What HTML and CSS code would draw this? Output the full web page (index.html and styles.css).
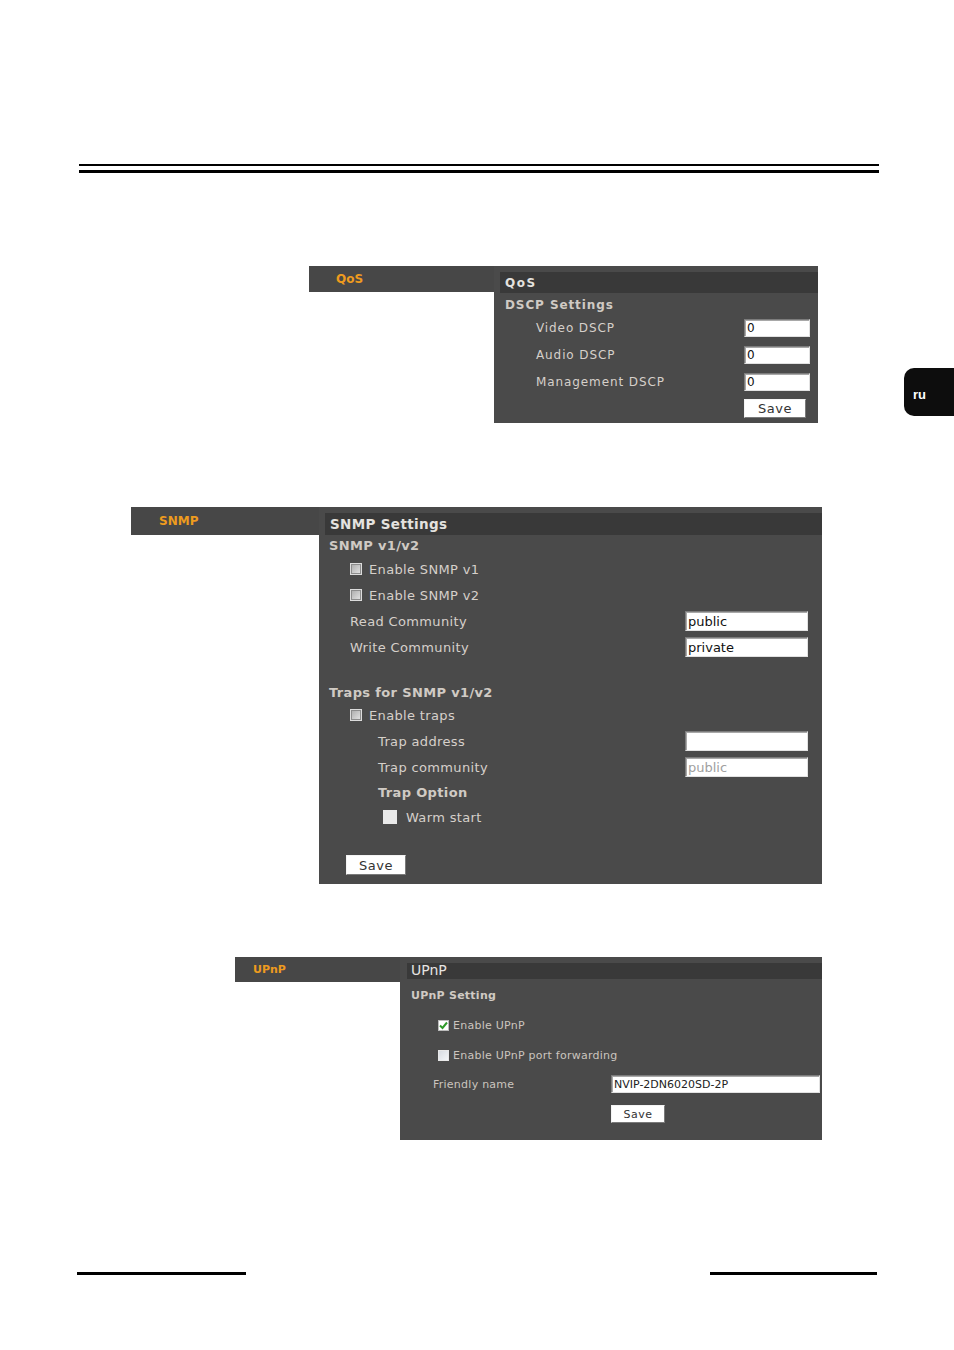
FILE: index.html
```html
<!DOCTYPE html>
<html lang="ru">
<head>
    <meta charset="UTF-8">
    <title>QoS / SNMP / UPnP</title>
    <link rel="stylesheet" href="styles.css">
</head>
<body>
<div class="page">

    <div class="rules-top">
        <div class="rule-thin"></div>
        <div class="rule-thick"></div>
    </div>

    <!-- QoS -->
    <section class="shot shot-qos">
        <div class="nav"><span>QoS</span></div>
        <div class="panel">
            <div class="panel-head">QoS</div>
            <div class="panel-body">
                <div class="group-title">DSCP Settings</div>
                <div class="form-grid">
                    <label>Video DSCP</label>
                    <input type="text" value="0">
                    <label>Audio DSCP</label>
                    <input type="text" value="0">
                    <label>Management DSCP</label>
                    <input type="text" value="0">
                </div>
                <div class="btn-row"><button>Save</button></div>
            </div>
        </div>
    </section>

    <!-- SNMP -->
    <section class="shot shot-snmp">
        <div class="nav"><span>SNMP</span></div>
        <div class="panel">
            <div class="panel-head">SNMP Settings</div>
            <div class="panel-body">
                <div class="group-title">SNMP v1/v2</div>
                <div class="row check-row"><span class="cb"></span>Enable SNMP v1</div>
                <div class="row check-row"><span class="cb"></span>Enable SNMP v2</div>
                <div class="row field-row">
                    <label>Read Community</label>
                    <input type="text" value="public">
                </div>
                <div class="row field-row">
                    <label>Write Community</label>
                    <input type="text" value="private">
                </div>

                <div class="group-title traps-title">Traps for SNMP v1/v2</div>
                <div class="row check-row"><span class="cb"></span>Enable traps</div>
                <div class="row field-row sub">
                    <label>Trap address</label>
                    <input type="text" value="">
                </div>
                <div class="row field-row sub">
                    <label>Trap community</label>
                    <input type="text" value="public" disabled>
                </div>
                <div class="row option-title">Trap Option</div>
                <div class="row warm-row"><span class="cb-flat"></span>Warm start</div>
                <div class="btn-row"><button>Save</button></div>
            </div>
        </div>
    </section>

    <!-- UPnP -->
    <section class="shot shot-upnp">
        <div class="nav"><span>UPnP</span></div>
        <div class="panel">
            <div class="panel-head">UPnP</div>
            <div class="panel-body">
                <div class="group-title">UPnP Setting</div>
                <div class="row check-row row-first">
                    <span class="cb cb-on">
                        <svg width="9" height="9" viewBox="0 0 9 9"><path d="M1 4.5 L3.5 7 L8 1.5" fill="none" stroke="#2f9a2a" stroke-width="2"/></svg>
                    </span>Enable UPnP
                </div>
                <div class="row check-row row-second"><span class="cb cb-pale"></span>Enable UPnP port forwarding</div>
                <div class="row field-row">
                    <label>Friendly name</label>
                    <input type="text" value="NVIP-2DN6020SD-2P">
                </div>
                <div class="btn-row"><button>Save</button></div>
            </div>
        </div>
    </section>

    <div class="rules-bottom">
        <span class="rule-left"></span>
        <span class="rule-right"></span>
    </div>

    <div class="lang-tab">ru</div>
</div>
</body>
</html>
```

FILE: styles.css
```css
/* Reset */
* {
    margin: 0;
    padding: 0;
    box-sizing: border-box;
}

body {
    background: #fff;
    font-family: 'DejaVu Sans', Verdana, sans-serif;
}

.page {
    position: relative;
    width: 954px;
    height: 1350px;
    overflow: hidden;
}

/* Garis atas */
.rules-top {
    width: 800px;
    margin: 164px 0 0 79px;
}

.rule-thin {
    height: 2px;
    background: #000;
}

.rule-thick {
    height: 3px;
    margin-top: 4px;
    background: #000;
}

/* Screenshot blocks */
.shot {
    display: flex;
    align-items: flex-start;
}

.nav {
    background: #474747;
    color: #ee9b1e;
    font-weight: bold;
    display: flex;
    align-items: center;
}

.panel {
    background: #4a4a4a;
    color: #d6d0ca;
    padding-top: 6px;
}

.panel-head {
    background: #393939;
    color: #e4e2df;
    font-weight: bold;
}

.group-title {
    font-weight: bold;
    color: #d0cac4;
    display: flex;
    align-items: center;
}

.row {
    display: flex;
    align-items: center;
}

input {
    font-family: 'DejaVu Sans', Verdana, sans-serif;
    background: #fff;
    color: #111;
    border: 1px solid;
    border-color: #7c7c7c #e2e2e2 #e2e2e2 #7c7c7c;
    box-shadow: inset 1px 1px 0 #a8a8a8;
    padding: 0 2px;
    outline: none;
}

input:disabled {
    color: #a0a0a0;
    background: #fff;
}

button {
    font-family: 'DejaVu Sans', Verdana, sans-serif;
    background: #fff;
    color: #333;
    border: 1px solid;
    border-color: #f4f4f4 #7a7a7a #7a7a7a #f4f4f4;
    letter-spacing: 0.5px;
}

.cb {
    display: inline-flex;
    align-items: center;
    justify-content: center;
    width: 12px;
    height: 12px;
    border: 1px solid #dcdcdc;
    box-shadow: inset 0 0 0 1px #8c8c8c;
    background: linear-gradient(135deg, #a9a9a9, #e6e6e6);
    margin-right: 7px;
}

.cb-flat {
    display: inline-block;
    width: 14px;
    height: 14px;
    background: #e9e9e9;
    margin-right: 9px;
}

/* ---------- QoS ---------- */
.shot-qos {
    margin: 93px 0 0 309px;
}

.shot-qos .nav {
    width: 185px;
    height: 26px;
    padding-left: 27px;
    font-size: 12px;
}

.shot-qos .panel {
    width: 324px;
    height: 157px;
    font-size: 12px;
    letter-spacing: 0.9px;
}

.shot-qos .panel-head {
    margin-left: 6px;
    height: 21px;
    line-height: 22px;
    padding-left: 5px;
    letter-spacing: 1.5px;
}

.shot-qos .panel-body {
    padding-right: 8px;
}

.shot-qos .group-title {
    height: 21px;
    padding-top: 2px;
    padding-left: 11px;
}

.form-grid {
    display: grid;
    grid-template-columns: 1fr 66px;
    grid-auto-rows: 27px;
    align-items: center;
}

.shot-qos .form-grid label {
    padding-left: 42px;
}

.shot-qos input {
    width: 66px;
    height: 18px;
    font-size: 12px;
}

.shot-qos .btn-row {
    margin-top: 4px;
    padding-left: 250px;
}

.shot-qos button {
    width: 62px;
    height: 19px;
    font-size: 13px;
}

/* ---------- SNMP ---------- */
.shot-snmp {
    margin: 84px 0 0 131px;
}

.shot-snmp .nav {
    width: 188px;
    height: 28px;
    padding-left: 28px;
    font-size: 12px;
}

.shot-snmp .panel {
    width: 503px;
    height: 377px;
    font-size: 13px;
    letter-spacing: 0.35px;
}

.shot-snmp .panel-head {
    margin-left: 6px;
    height: 22px;
    line-height: 23px;
    padding-left: 5px;
    font-size: 13.5px;
}

.shot-snmp .panel-body {
    padding-right: 14px;
}

.shot-snmp .group-title {
    height: 20px;
    padding-left: 10px;
    margin-bottom: 1px;
}

.shot-snmp .traps-title {
    margin-top: 22px;
    margin-bottom: 0;
}

.shot-snmp .row {
    height: 26px;
}

.shot-snmp .check-row {
    padding-left: 31px;
}

.shot-snmp .field-row {
    justify-content: space-between;
    padding-left: 31px;
}

.shot-snmp .field-row.sub {
    padding-left: 59px;
}

.shot-snmp input {
    width: 123px;
    height: 20px;
    font-size: 13px;
}

.shot-snmp .option-title {
    height: 24px;
    padding-left: 59px;
    font-weight: bold;
    color: #d0cac4;
}

.shot-snmp .warm-row {
    padding-left: 64px;
}

.shot-snmp .btn-row {
    margin-top: 25px;
    padding-left: 27px;
}

.shot-snmp button {
    width: 60px;
    height: 20px;
    font-size: 13px;
}

/* ---------- UPnP ---------- */
.shot-upnp {
    margin: 73px 0 0 235px;
}

.shot-upnp .nav {
    width: 165px;
    height: 25px;
    padding-left: 18px;
    font-size: 11px;
}

.shot-upnp .panel {
    width: 422px;
    height: 183px;
    font-size: 11px;
    letter-spacing: 0.25px;
    color: #cbc5bf;
}

.shot-upnp .panel-head {
    margin-left: 7px;
    height: 16px;
    line-height: 14px;
    padding-left: 4px;
    font-size: 14px;
    font-weight: normal;
    letter-spacing: 0;
    color: #e6e4e2;
}

.shot-upnp .panel-body {
    padding-right: 2px;
}

.shot-upnp .group-title {
    margin-top: 6px;
    height: 20px;
    padding-left: 11px;
}

.shot-upnp .check-row {
    padding-left: 38px;
}

.shot-upnp .row-first {
    margin-top: 5px;
    height: 30px;
}

.shot-upnp .row-second {
    height: 30px;
}

.shot-upnp .cb {
    width: 11px;
    height: 11px;
    margin-right: 4px;
}

.shot-upnp .cb-on {
    background: #fff;
    border: 1px solid #bbb;
    box-shadow: none;
}

.shot-upnp .cb-pale {
    background: linear-gradient(135deg, #d8dce2, #f4f6f8);
    border: 1px solid #e8e8e8;
    box-shadow: none;
}

.shot-upnp .field-row {
    height: 28px;
    justify-content: space-between;
    padding-left: 33px;
}

.shot-upnp input {
    width: 209px;
    height: 18px;
    font-size: 11px;
    letter-spacing: 0;
    color: #222;
}

.shot-upnp .btn-row {
    margin-top: 7px;
    padding-left: 211px;
}

.shot-upnp button {
    width: 54px;
    height: 18px;
    font-size: 11px;
}

/* Garis bawah */
.rules-bottom {
    display: flex;
    justify-content: space-between;
    width: 800px;
    margin: 132px 0 0 77px;
}

.rules-bottom span {
    display: block;
    height: 3px;
    background: #000;
}

.rule-left {
    width: 169px;
}

.rule-right {
    width: 167px;
}

/* Tab bahasa di tepi kanan */
.lang-tab {
    position: absolute;
    top: 368px;
    left: 904px;
    width: 60px;
    height: 48px;
    border-radius: 10px 0 0 10px;
    background: #0d0d0d;
    color: #fff;
    font-family: 'Liberation Sans', Arial, sans-serif;
    font-weight: bold;
    font-size: 13px;
    line-height: 53px;
    padding-left: 9px;
}
```
